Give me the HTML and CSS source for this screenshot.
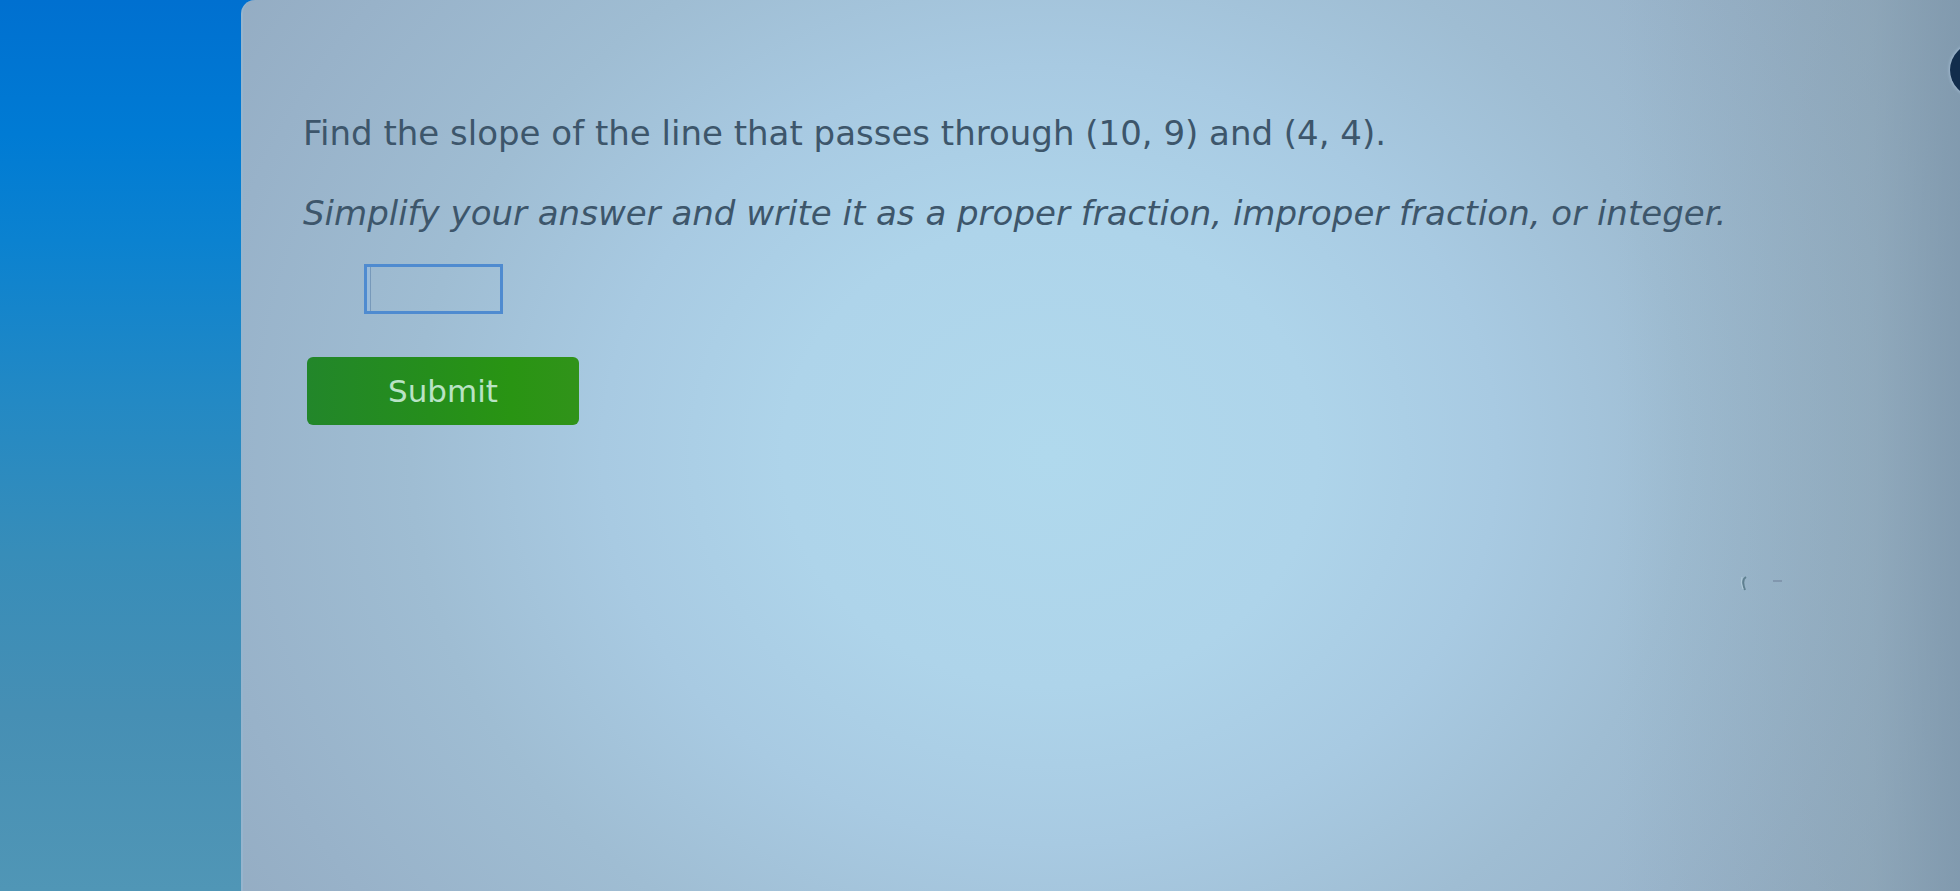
FILE: index.html
```html
<!DOCTYPE html>
<html lang="en">

<head>
    <meta charset="UTF-8">
    <meta name="viewport" content="width=device-width, initial-scale=1.0">
    <title>Find the slope</title>
    <link rel="stylesheet" href="styles.css">
</head>

<body>
    <main class="panel">
        <form class="question">
            <p class="prompt">Find the slope of the line that passes through (10, 9) and (4, 4).</p>
            <label class="hint" for="answer">Simplify your answer and write it as a proper fraction, improper fraction, or integer.</label>
            <input class="answer" type="text" id="answer" name="answer" autocomplete="off">
            <button class="submit" type="submit">Submit</button>
        </form>
        <button class="round-button" type="button" aria-label="More"></button>
        <svg class="marks" width="44" height="20" viewBox="0 0 44 20" aria-hidden="true">
            <path d="M6 2 Q1 5 5 15" fill="none" stroke="#5f8090" stroke-width="2" />
            <path d="M2 2 Q0 8 3 14" fill="none" stroke="#b3cddb" stroke-width="1" />
            <path d="M33 6 H42" stroke="#8197ae" stroke-width="2" />
        </svg>
    </main>
</body>

</html>
```
FILE: styles.css
```css
* {
    box-sizing: border-box;
}

body {
    margin: 0;
    min-height: 100vh;
    display: flex;
    overflow: hidden;
    font-family: Verdana, "DejaVu Sans", sans-serif;
    font-size: 34px;
    line-height: 40px;
    color: #3d566b;
    background: linear-gradient(180deg, #0070d0 0%, #007bd4 15%, #0b82d0 27%, #2389c4 45%, #378db9 62%, #468fb4 80%, #5096b6 100%);
}

.panel {
    position: relative;
    flex: 1;
    margin-left: 241px;
    padding: 113px 60px 60px;
    border-radius: 14px 0 0 0;
    border-left: 2px solid #96b5ce;
    background:
        linear-gradient(90deg, rgba(130, 155, 170, 0) 80%, rgba(130, 155, 168, 0.4) 95%, rgba(125, 150, 170, 0.8) 100%),
        radial-gradient(ellipse 62% 104% at 47% 51%, #b0d9ed 0%, #aed4ea 25%, #a8cae2 42%, #9fbdd3 60%, #98b2c9 80%, #91a8be 100%);
}

.question {
    display: flex;
    flex-direction: column;
    align-items: flex-start;
}

.prompt {
    margin: 0;
}

.hint {
    margin-top: 40px;
    font-style: italic;
}

.answer {
    width: 139px;
    height: 50px;
    margin: 31px 0 0 61px;
    padding: 4px 8px;
    border: 3px solid #4f8bd0;
    background: transparent;
    color: inherit;
    font: inherit;
    outline: none;
    box-shadow: inset 3px 0 0 #9bbcda, inset 4px 0 0 #7799ba;
}

.submit {
    width: 272px;
    height: 68px;
    margin: 43px 0 0 4px;
    border: none;
    border-radius: 6px;
    background: linear-gradient(90deg, #22862a, #258e1c 45%, #299413 75%, #31931a);
    color: #b9e3c5;
    font-family: inherit;
    font-size: 31px;
    cursor: pointer;
}

/* sits half outside the right edge */
.round-button {
    position: absolute;
    top: 43px;
    right: -44px;
    width: 54px;
    height: 54px;
    padding: 0;
    border: none;
    border-radius: 50%;
    background: #122d4c;
    box-shadow: 0 0 3px 1px #a1b9cf;
}

.marks {
    position: absolute;
    top: 575px;
    right: 176px;
}
```
